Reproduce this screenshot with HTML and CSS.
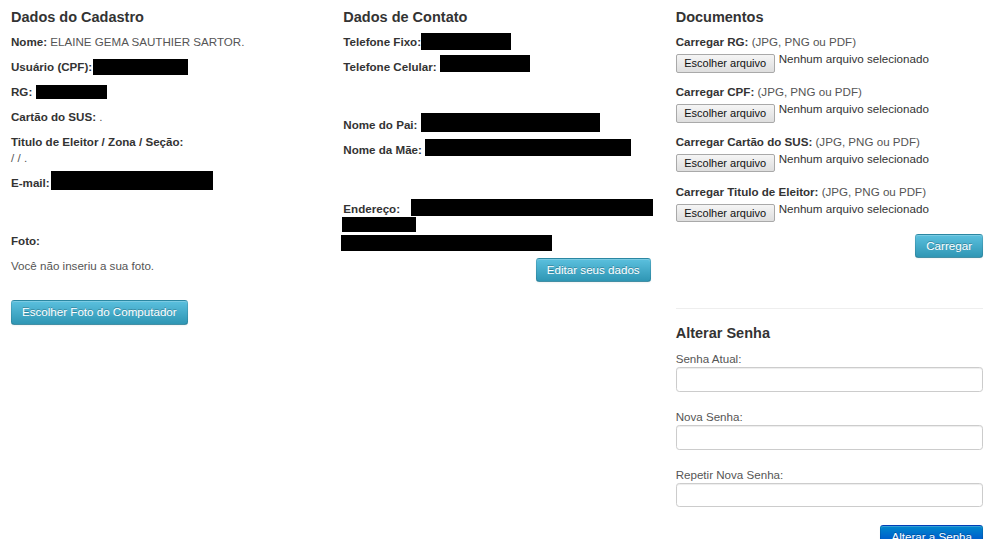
FILE: index.html
```html
<!DOCTYPE html>
<html lang="pt-BR">
<head>
<meta charset="utf-8">
<title>Dados do Cadastro</title>
<link rel="stylesheet" href="styles.css">
</head>
<body>
<div class="page">
  <section class="col">
    <h4 class="title">Dados do Cadastro</h4>
    <p class="row"><b>Nome:</b> <span class="val">ELAINE GEMA SAUTHIER SARTOR.</span></p>
    <p class="row"><b>Usuário (CPF):</b><span class="redact r-cpf"></span></p>
    <p class="row"><b>RG:</b> <span class="redact r-rg"></span></p>
    <p class="row"><b>Cartão do SUS:</b> <span class="val">.</span></p>
    <p class="row"><b>Titulo de Eleitor / Zona / Seção:</b><br><span class="val">/ / .</span></p>
    <p class="row"><b>E-mail:</b><span class="redact r-email"></span></p>
    <p class="row gap"><b>Foto:</b></p>
    <p class="row val">Você não inseriu a sua foto.</p>
    <div class="photo-actions">
      <button class="btn btn-info" type="button">Escolher Foto do Computador</button>
    </div>
  </section>

  <section class="col">
    <h4 class="title">Dados de Contato</h4>
    <p class="row"><b>Telefone Fixo:</b><span class="redact r-fixo"></span></p>
    <p class="row"><b>Telefone Celular:</b> <span class="redact r-cel"></span></p>
    <p class="row gap"><b>Nome do Pai:</b> <span class="redact r-pai"></span></p>
    <p class="row"><b>Nome da Mãe:</b> <span class="redact r-mae"></span></p>
    <p class="row gap2"><b>Endereço:</b><span class="redact r-end1"></span><br><span class="redact r-end2"></span><br><span class="redact r-end3"></span></p>
    <div class="actions">
      <button class="btn btn-info" type="button">Editar seus dados</button>
    </div>
  </section>

  <section class="col">
    <h4 class="title">Documentos</h4>
    <div class="upload">
      <p class="up-label"><b>Carregar RG:</b> <span class="val">(JPG, PNG ou PDF)</span></p>
      <div class="file"><span class="file-btn">Escolher arquivo</span><span class="file-name">Nenhum arquivo selecionado</span></div>
    </div>
    <div class="upload">
      <p class="up-label"><b>Carregar CPF:</b> <span class="val">(JPG, PNG ou PDF)</span></p>
      <div class="file"><span class="file-btn">Escolher arquivo</span><span class="file-name">Nenhum arquivo selecionado</span></div>
    </div>
    <div class="upload">
      <p class="up-label"><b>Carregar Cartão do SUS:</b> <span class="val">(JPG, PNG ou PDF)</span></p>
      <div class="file"><span class="file-btn">Escolher arquivo</span><span class="file-name">Nenhum arquivo selecionado</span></div>
    </div>
    <div class="upload">
      <p class="up-label"><b>Carregar Titulo de Eleitor:</b> <span class="val">(JPG, PNG ou PDF)</span></p>
      <div class="file"><span class="file-btn">Escolher arquivo</span><span class="file-name">Nenhum arquivo selecionado</span></div>
    </div>
    <div class="actions">
      <button class="btn btn-info" type="button">Carregar</button>
    </div>

    <hr class="sep">

    <h4 class="title sub">Alterar Senha</h4>
    <div class="field">
      <label class="f-label">Senha Atual:</label>
      <input class="f-input" type="password">
    </div>
    <div class="field">
      <label class="f-label">Nova Senha:</label>
      <input class="f-input" type="password">
    </div>
    <div class="field">
      <label class="f-label">Repetir Nova Senha:</label>
      <input class="f-input" type="password">
    </div>
    <div class="actions">
      <button class="btn btn-primary" type="button">Alterar a Senha</button>
    </div>
  </section>
</div>
</body>
</html>
```

FILE: styles.css
```css
html, body {
  margin: 0;
  padding: 0;
  background: #fff;
}

body {
  font-family: "Liberation Sans", Arial, Helvetica, sans-serif;
  font-size: 11.6px;
  line-height: 16px;
  color: #333;
}

.page {
  display: grid;
  grid-template-columns: repeat(3, 1fr);
}

.col {
  padding: 0 14px 0 11px;
  min-width: 0;
}

.title {
  font-size: 14.5px;
  line-height: 16px;
  font-weight: bold;
  color: #333;
  margin: 9px 0 9.4px;
}

.title.sub {
  margin-top: 10px;
  margin-bottom: 10px;
}

.row {
  margin: 0 0 9px;
}

.row.gap {
  margin-top: 42px;
}

.row.gap2 {
  margin-top: 42.7px;
}

b {
  font-weight: bold;
  color: #333;
}

.val {
  color: #555;
}

/* redaction boxes */
.redact {
  display: inline-block;
  background: #000;
  vertical-align: -3px;
  margin-top: -7px;
}

.r-cpf  { width: 94.5px; height: 16px; margin-left: 1px; vertical-align: -4px; }
.r-rg   { width: 71.5px; height: 14px; }
.r-email{ width: 162px; height: 19px; margin-left: 1px; }
.r-fixo { width: 90px; height: 17px; vertical-align: -4px; }
.r-cel  { width: 90px; height: 17px; vertical-align: -1px; }
.r-pai  { width: 179px; height: 19px; }
.r-mae  { width: 206px; height: 17px; vertical-align: -2px; }
.r-end1 { width: 242px; height: 17px; margin-left: 11px; margin-right: -6px; }
.r-end2 { width: 74px; height: 15px; margin-left: -1px; }
.r-end3 { width: 211px; height: 16px; margin-left: -2px; vertical-align: -4px; margin-bottom: -2px; }

/* buttons */
.btn {
  display: inline-block;
  box-sizing: border-box;
  height: 24.4px;
  padding: 0 10px;
  margin: 0;
  font-family: inherit;
  font-size: 11.6px;
  line-height: 22.4px;
  color: #fff;
  text-shadow: 0 -1px 0 rgba(0, 0, 0, 0.25);
  border: 1px solid;
  border-color: rgba(0, 0, 0, 0.1) rgba(0, 0, 0, 0.1) rgba(0, 0, 0, 0.25);
  border-radius: 3.3px;
  box-shadow: inset 0 1px 0 rgba(255, 255, 255, 0.2), 0 1px 2px rgba(0, 0, 0, 0.05);
  cursor: pointer;
  white-space: nowrap;
}

.btn-info {
  background: linear-gradient(to bottom, #5bc0de, #2f96b4);
}

.btn-primary {
  background: linear-gradient(to bottom, #0088cc, #0044cc);
}

.photo-actions {
  margin-top: 26px;
}

.actions {
  display: flex;
  justify-content: flex-end;
}

/* uploads */
.upload {
  margin-bottom: 11.3px;
}

.up-label {
  margin: 0 0 4px;
}

.file {
  display: flex;
  align-items: flex-start;
  height: 18.5px;
}

.file-btn {
  box-sizing: border-box;
  height: 18.5px;
  width: 99px;
  padding: 0;
  text-align: center;
  font-size: 11px;
  line-height: 16.5px;
  color: #111;
  background: linear-gradient(to bottom, #f5f5f5, #dedede);
  border: 1px solid #a9a9a9;
  border-radius: 2px;
}

.file-name {
  margin: -3px 0 0 4px;
  line-height: 16px;
  color: #333;
}

/* separator */
.sep {
  margin: 50px 0 15.5px;
  border: 0;
  border-top: 1px solid #eee;
  border-bottom: 1px solid #fff;
  height: 0;
}

/* password form */
.field {
  margin-bottom: 17.4px;
}

.f-label {
  display: block;
  line-height: 16px;
  color: #555;
}

.f-input {
  display: block;
  box-sizing: border-box;
  width: 100%;
  height: 24.4px;
  margin: 0;
  padding: 3px 5px;
  font-family: inherit;
  font-size: 11.6px;
  border: 1px solid #ccc;
  border-radius: 3.3px;
  background: #fff;
  box-shadow: inset 0 1px 1px rgba(0, 0, 0, 0.075);
}
```
